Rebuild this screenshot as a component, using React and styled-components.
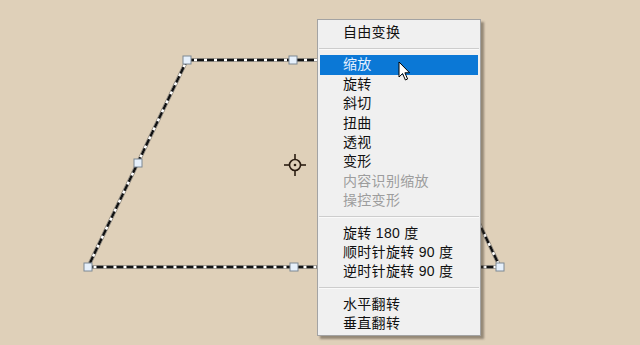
import React from "react";
import styled, { createGlobalStyle } from "styled-components";

const Global = createGlobalStyle`
  html, body { margin: 0; padding: 0; background: #dfd0b9; }
  body { font-family: "Liberation Sans", "Noto Sans CJK SC", sans-serif; }
`;

const Canvas = styled.div`
  position: relative;
  width: 640px;
  height: 345px;
  overflow: hidden;
  background: #dfd0b9;
`;

const Drawing = styled.svg`
  display: block;
`;

const Menu = styled.div`
  position: absolute;
  left: 317px;
  top: 19px;
  width: 162px;
  padding: 3px 0 2px;
  background: #f0f0f0;
  border: 1px solid #a3a3a3;
  box-shadow: 3px 3px 2px rgba(60, 50, 40, 0.45);
  display: flex;
  flex-direction: column;
  font-family: "Liberation Sans", "Noto Sans CJK SC", sans-serif;
  font-size: 14px;
`;

const Item = styled.div`
  height: 19.4px;
  line-height: 19.4px;
  margin: 0 2px;
  padding-left: 23px;
  white-space: pre;
  letter-spacing: 0.3px;
  color: ${(p) => (p.$active ? "#e3f0ff" : p.$disabled ? "#9d9d9d" : "#111")};
  background: ${(p) => (p.$active ? "#0b78d6" : "transparent")};
`;

const Separator = styled.div`
  height: 13px;
  display: flex;
  align-items: center;
  margin: 0 1px;
  &::after {
    content: "";
    flex: 1;
    height: 1px;
    background: #cdcdcd;
    border-bottom: 1px solid #fafafa;
  }
`;

const Cursor = styled.svg`
  position: absolute;
  left: 398px;
  top: 61px;
`;

const handles = [
  [187, 60], [293, 60], [401, 60],
  [138, 163], [450, 163],
  [88, 267], [294, 267], [500, 267],
];

const pts = "187,60 401,60 500,267 88,267";

const groups = [
  [{ t: "自由变换" }],
  [
    { t: "缩放", active: true },
    { t: "旋转" },
    { t: "斜切" },
    { t: "扭曲" },
    { t: "透视" },
    { t: "变形" },
    { t: "内容识别缩放", disabled: true },
    { t: "操控变形", disabled: true },
  ],
  [
    { t: "旋转 180 度" },
    { t: "顺时针旋转 90 度" },
    { t: "逆时针旋转 90 度" },
  ],
  [{ t: "水平翻转" }, { t: "垂直翻转" }],
];

export default function App() {
  return (
    <>
      <Global />
      <Canvas>
        <Drawing width="640" height="345" viewBox="0 0 640 345">
          <polygon points={pts} fill="none" stroke="#8c8579" strokeWidth="3.8" />
          <polygon points={pts} fill="none" stroke="#ffffff" strokeWidth="2.4" />
          <polygon points={pts} fill="none" stroke="#111" strokeWidth="2.4" strokeDasharray="7 3" />
          {handles.map(([x, y]) => (
            <rect key={`${x}-${y}`} x={x - 4} y={y - 4} width="8" height="8" fill="#e6f0fb" stroke="#7d8894" strokeWidth="1" />
          ))}
          <g stroke="#2b1d12" strokeWidth="1.6" fill="none">
            <circle cx="295" cy="165" r="5.5" />
            <line x1="284" y1="165" x2="289.5" y2="165" />
            <line x1="300.5" y1="165" x2="306" y2="165" />
            <line x1="295" y1="154" x2="295" y2="159.5" />
            <line x1="295" y1="170.5" x2="295" y2="176" />
          </g>
          <circle cx="295" cy="165" r="1.3" fill="#2b1d12" />
        </Drawing>
        <Menu>
          {groups.map((g, gi) => (
            <React.Fragment key={gi}>
              {gi > 0 && <Separator />}
              {g.map((it) => (
                <Item key={it.t} $active={it.active} $disabled={it.disabled}>
                  {it.t}
                </Item>
              ))}
            </React.Fragment>
          ))}
        </Menu>
        <Cursor width="14" height="21" viewBox="0 0 14 21">
          <path d="M1 1 L1 16 L4.6 12.6 L7.4 19 L9.6 18 L6.9 11.8 L11.6 11.8 Z" fill="#fff" stroke="#000" strokeWidth="1" strokeLinejoin="round" />
        </Cursor>
      </Canvas>
    </>
  );
}
